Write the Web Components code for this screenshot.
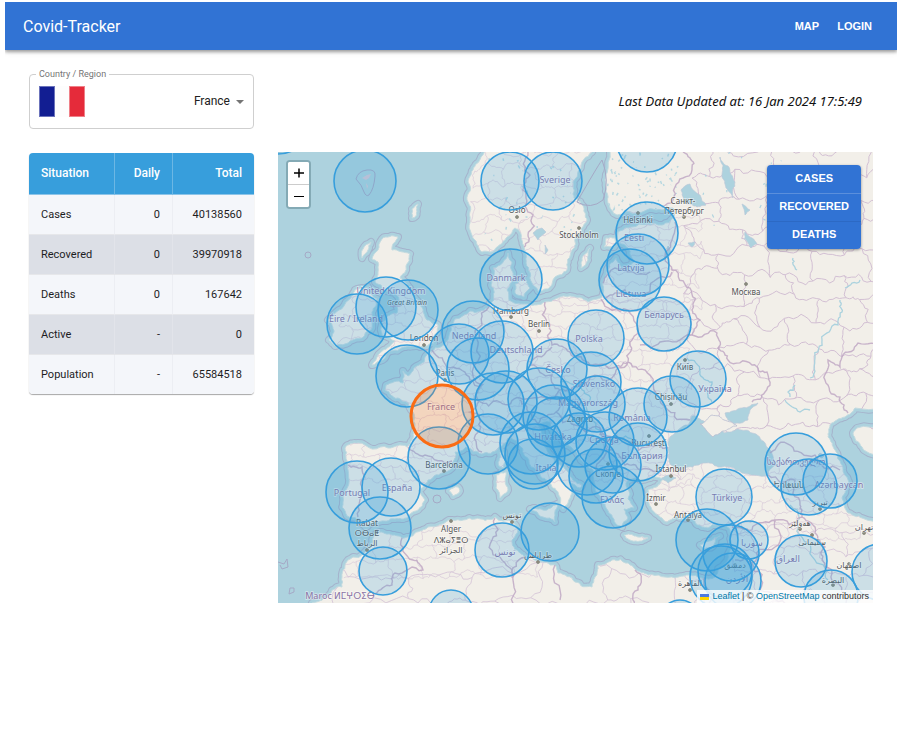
<!DOCTYPE html>
<html lang="en">
<head>
<meta charset="utf-8">
<title>Covid-Tracker</title>
<style>
  body { margin: 2px 8px 0 5px; background: #fff; color: #212121; font-family: Roboto, "Liberation Sans", sans-serif; }
</style>
</head>
<body>
<app-bar>
  Covid-Tracker
  <a slot="nav" href="#map">Map</a>
  <a slot="nav" href="#login">Login</a>
</app-bar>
<tracker-layout>
  <country-picker slot="filter"></country-picker>
  <update-stamp slot="status">Last Data Updated at: 16 Jan 2024 17:5:49</update-stamp>
  <situation-table slot="side"></situation-table>
  <case-map slot="main">
    <zoom-control slot="start"></zoom-control>
    <layer-switch slot="end"></layer-switch>
    <map-credit slot="credit"></map-credit>
  </case-map>
</tracker-layout>

<script>
const define = (name, html, setup) => {
  const template = document.createElement('template');
  template.innerHTML = html;
  customElements.define(name, class extends HTMLElement {
    constructor() {
      super();
      const root = this.attachShadow({ mode: 'open' });
      root.append(template.content.cloneNode(true));
      if (setup) setup(root);
    }
  });
};

define('app-bar', `
<style>
  :host { display: block; }
  header { display: flex; align-items: center; justify-content: space-between; min-height: 48px; padding: 0 25px 0 18px;
    background: #3173d4; color: #fff; box-shadow: 0 2px 3px rgba(0,0,0,.32), 0 1px 7px rgba(0,0,0,.14); }
  .title { font-size: 16px; line-height: 24px; padding-top: 1px; }
  nav { display: flex; gap: 18px; }
  ::slotted(a) { color: #fff; font: bold 11px/20px "Liberation Sans", sans-serif; text-transform: uppercase; text-decoration: none; }
</style>
<header><div class="title"><slot></slot></div><nav><slot name="nav"></slot></nav></header>`);

define('tracker-layout', `
<style>
  :host { display: block; padding: 18px 24px 24px; }
  .grid { display: grid; grid-template-columns: 225px minmax(0, 1fr); column-gap: 24px; row-gap: 23px; align-items: start; }
  .status { align-self: center; text-align: right; padding: 4px 11px 0 0; }
</style>
<div class="grid">
  <slot name="filter"></slot>
  <div class="status"><slot name="status"></slot></div>
  <slot name="side"></slot>
  <slot name="main"></slot>
</div>`);

define('country-picker', `
<style>
  :host { display: block; }
  fieldset { margin: 0; padding: 0 9px; border: 1px solid #cfcfcf; border-radius: 4px; min-width: 0; }
  legend { margin: 0; padding: 0 3px; font-size: 9px; line-height: 12px; color: #757575; margin-left: -3px; }
  .row { display: flex; align-items: center; height: 48px; }
  .flag { width: 46px; height: 31px; flex: none; margin-top: -5px; }
  .field { flex: 1; display: flex; align-items: center; margin-top: -6px; }
  select { flex: 1; appearance: none; border: 0; background: none; padding: 0; margin: 0 6px 0 0; font: 12px/24px Roboto, sans-serif; color: #212121;
    text-align-last: right; }
  .arrow { width: 8px; height: 4px; flex: none; margin-top: 1px; }
</style>
<fieldset>
  <legend><label for="country">Country / Region</label></legend>
  <div class="row">
    <svg class="flag" viewBox="0 0 46 31" aria-hidden="true">
      <rect width="46" height="31" fill="#fdfdfd"/>
      <rect x=".5" y=".5" width="15" height="30" fill="#121e92" stroke="#6b73bb"/>
      <rect x="30.500" y=".5" width="15" height="30" fill="#e52b3a" stroke="#ef8088"/>
    </svg>
    <div class="field">
      <select id="country"><option>France</option></select>
      <svg class="arrow" viewBox="0 0 8 4" aria-hidden="true"><path d="M0 0h8L4 4z" fill="#757575"/></svg>
    </div>
  </div>
</fieldset>`);

define('update-stamp', `
<style>
  :host { display: block; font: italic 13px/20px "Noto Sans", "Open Sans", sans-serif; color: #111; }
</style><slot></slot>`);

define('situation-table', `
<style>
  :host { display: block; margin-top: 1px; }
  .card { border-radius: 4px; overflow: hidden; box-shadow: 0 1px 1px rgba(0,0,0,.35); }
  table { width: 100%; border-collapse: separate; border-spacing: 0; table-layout: fixed; font-size: 11px; line-height: 15px; }
  col.a { width: 85px; } col.b { width: 58px; }
  th, td { padding: 12px; text-align: right; }
  th:first-child { text-align: left; }
  thead th { background: #379edc; color: #fff; font-size: 12px; line-height: 17px; font-weight: 500; border-bottom: 1px solid #8cc4e8; }
  thead th + th { border-left: 1px solid #6cb7e4; }
  tbody th { font-weight: 400; }
  tbody th, tbody td { background: #f4f6fa; border-bottom: 1px solid #e6e7ea; color: #1d1d1f; }
  tbody tr:nth-child(even) > * { background: #dcdfe6; }
  tbody tr:last-child > * { border-bottom: 0; }
  tbody td { border-left: 1px solid #eceef3; }
  tbody tr:nth-child(even) td { border-left-color: #e2e4ea; }
</style>
<div class="card"><table>
  <colgroup><col class="a"><col class="b"><col></colgroup>
  <thead><tr><th scope="col">Situation</th><th scope="col">Daily</th><th scope="col">Total</th></tr></thead>
  <tbody>
    <tr><th scope="row">Cases</th><td>0</td><td>40138560</td></tr>
    <tr><th scope="row">Recovered</th><td>0</td><td>39970918</td></tr>
    <tr><th scope="row">Deaths</th><td>0</td><td>167642</td></tr>
    <tr><th scope="row">Active</th><td>-</td><td>0</td></tr>
    <tr><th scope="row">Population</th><td>-</td><td>65584518</td></tr>
  </tbody>
</table></div>`);

define('zoom-control', `
<style>
  :host { display: block; }
  .bar { border: 2px solid rgba(70,110,120,.4); border-radius: 4px; background: #fff; background-clip: padding-box; overflow: hidden; }
  button { display: flex; align-items: center; justify-content: center; width: 21px; height: 22px; margin: 0; padding: 0; border: 0; background: #fff; }
  button + button { border-top: 1px solid #ccc; height: 23px; }
  svg { width: 10px; height: 10px; }
</style>
<div class="bar">
  <button aria-label="Zoom in"><svg viewBox="0 0 10 10"><path d="M5 .5v9M0 5h10" stroke="#000" stroke-width="1.500"/></svg></button>
  <button aria-label="Zoom out"><svg viewBox="0 0 10 10"><path d="M0 5.500h10" stroke="#000" stroke-width="1"/></svg></button>
</div>`);

define('layer-switch', `
<style>
  :host { display: block; }
  .group { display: flex; flex-direction: column; border-radius: 4px; overflow: hidden; box-shadow: 0 1px 3px rgba(0,0,0,.4); }
  button { margin: 0; padding: 0 12px 3px; height: 28px; border: 0; background: #3173d4; color: #fff; font: bold 11px/20px "Liberation Sans", sans-serif; text-transform: uppercase; }
  button + button { border-top: 1px solid #2c69c4; }
  button:nth-child(2) { border-top-color: #5b8fdc; }
</style>
<div class="group"><button>Cases</button><button>Recovered</button><button>Deaths</button></div>`);

define('map-credit', `
<style>
  :host { display: flex; align-items: center; gap: 3px; padding: 0 4px 0 3px; background: rgba(255,255,255,.8); color: #333;
    font: 9px/13px "Liberation Sans", sans-serif; white-space: nowrap; }
  a { color: #0078a8; text-decoration: none; }
  svg { width: 9px; height: 6px; }
</style>
<svg viewBox="0 0 9 6" aria-hidden="true"><path fill="#4c7be1" d="M0 0h9v3H0z"/><path fill="#ffd500" d="M0 3h9v3H0z"/></svg>
<span><a href="#leaflet">Leaflet</a> | © <a href="#osm">OpenStreetMap</a> contributors</span>`);

/* Geography, in map canvas coordinates */
const LAND = {
  mainland: '613,130 910,130 910,406 855,408 845,417 830,425 828,437 835,450 842,465 849,482 842,498 848,513 862,518 910,514 910,630 300,630 312,603 325,598 342,587 342,577 348,560 367,550 374,536 382,532 402,538 415,533 428,527 452,520 475,519 495,517 513,521 518,530 512,540 515,550 525,557 538,562 555,565 558,573 575,582 592,587 595,577 598,565 612,560 628,563 636,570 648,575 675,578 688,575 702,578 715,577 725,563 732,547 730,530 718,524 708,528 702,527 692,519 675,516 667,522 660,517 652,510 648,500 648,490 660,484 664,478 642,480 635,478 626,483 630,494 628,499 634,508 624,509 628,518 622,527 616,524 609,513 605,503 597,493 594,482 593,470 580,458 565,445 553,432 550,422 538,425 541,442 548,452 555,463 568,472 582,485 580,488 570,483 572,493 568,503 563,509 560,497 552,487 541,477 531,467 524,455 518,443 508,438 498,448 482,454 466,447 455,452 453,462 452,468 442,473 428,480 419,490 425,500 418,510 408,517 395,519 378,522 366,527 360,519 347,516 343,497 348,470 346,457 345,448 358,443 388,448 407,447 412,440 415,425 413,412 408,403 398,398 385,390 386,385 403,383 403,371 408,376 414,368 424,362 430,352 442,346 450,332 455,319 470,311 488,308 494,300 491,285 493,268 508,253 512,262 513,277 507,290 509,300 528,304 545,302 570,296 588,302 601,298 603,283 608,268 616,258 622,268 634,262 628,248 617,242 618,232 632,227 662,225 674,217 673,208 662,210 638,213 617,215 608,203 606,187 607,173',
  scandinavia: '488,130 481,157 473,170 468,182 467,200 470,220 475,240 482,252 490,252 505,240 515,228 520,232 524,247 526,263 532,283 538,291 550,287 555,277 567,270 572,250 576,237 587,220 584,208 574,198 573,182 579,170 592,152 600,130',
  britain: '382,239 398,237 392,250 410,254 406,266 400,278 408,286 413,296 423,309 427,320 438,325 437,333 430,338 434,343 420,347 404,347 390,351 376,363 372,365 380,353 395,341 390,338 382,335 381,328 386,318 397,313 399,300 394,292 385,291 375,282 378,262 372,259 378,250',
  ireland: '355,290 368,287 377,299 372,312 371,330 350,341 335,346 329,340 334,332 328,320 339,310 346,302',
  zealand: '515,284 526,280 530,288 524,297 515,293',
  gotland: '582,258 590,248 588,260 581,268',
  saaremaa: '606,238 615,238 614,247 604,247',
  corsica: '500,452 504,452 504,468 499,466',
  sardinia: '496,475 506,472 508,490 500,498 496,488',
  sicily: '530,509 543,510 557,504 555,522 543,517',
  crete: '624,535 636,536 648,538 642,541 626,538',
  cyprus: '700,545 709,541 720,536 713,546 704,549',
  balearic: '449,491 458,487 460,491 453,496',
  shetland: '412,209 418,204 416,216 412,218',
  hebrides: '363,249 371,242 368,250 362,258',
  caspianEast: '910,425 857,428 853,433 862,447 885,455 910,455'
};
const WATER = [
  '671,465 668,450 671,436 678,430 688,425 692,416 700,419 712,428 724,433 738,429 752,433 765,443 772,454 776,465 768,475 742,473 718,467 705,463 688,467 680,472',
  '725,413 742,408 758,403 750,410 748,420 737,423 728,420',
  '681,190 690,184 700,195 706,205 694,206 683,203',
  '720,157 728,166 735,182 733,198 726,188 722,175',
  '662,478 669,475 676,478 668,483',
  '742,204 750,210 745,215', '745,232 752,238 757,244 751,248', '688,243 695,242 692,247',
  '533,233 542,228 546,232 538,240', '545,245 548,250 545,254',
  '668,246 671,252 667,256', '818,455 820,453 824,456 821,458'
];
const CRIMEA = '700,424 712,415 724,420 737,426 725,431 713,437 706,430';
const BORDERS = [
  '528,152 530,175 526,195 533,215 528,235 524,247', '683,152 690,158 692,170 675,187 662,207',
  '675,222 668,250 672,270 690,288 692,310 700,320 692,335 660,342 640,345',
  '545,302 550,325 552,345 570,352 590,365 612,368 628,362 632,340 628,310 601,299',
  '692,335 717,333 718,348 728,360 752,365 767,372 765,392 752,402',
  '885,346 858,343 842,357 840,367 828,360 825,380 840,397 848,413',
  '408,447 425,455 452,461', '348,465 362,467 362,490 358,517',
  '432,350 450,368 470,380 482,385 478,400 470,412 480,430 482,452',
  '478,400 500,402 520,398 548,400 560,390 552,375 530,365 552,347',
  '490,305 482,325 478,345 482,385', '560,390 580,385 612,378 628,362 650,375 668,410 690,420',
  '560,392 556,412 575,425 600,428 625,440 655,446 668,448', '600,428 606,450 596,470', '606,450 625,465 640,470 662,470',
  '538,425 530,412 520,400', '538,424 556,412', '606,298 625,290 650,292 672,272', '603,283 615,268 650,272',
  '402,538 413,560 423,570 395,573 392,585 375,594', '495,518 492,540 505,563 513,580 508,610', '525,557 512,578',
  '635,570 638,590 636,610', '732,527 752,530 775,520 802,517', '775,520 775,547 752,563 735,560',
  '802,517 815,533 825,547 822,560 835,583 845,610', '770,453 790,445 815,455 840,470',
  '768,475 795,480 800,505 802,517', '752,563 760,590 790,605', '705,577 712,595 708,610', '555,565 560,600', '390,306 402,305'
];
const RIVERS = ['840,300 842,312 838,325 822,340 815,358 810,378', '687,358 700,372 712,382 708,395 712,402', '795,385 788,392 790,397', '793,258 797,270', '560,382 580,386 590,400 592,420 620,438 640,445', '785,400 800,412 810,410', '845,288 860,280', '790,505 800,535 815,560 828,580'];
/* x, y, radius */
const MARKERS = [[278,121,33],[365,181,31],[510,181,29],[553,181,29],[647,142,30],[647,233,31],[638,265,31],[630,280,31],[511,280,31],[664,324,27],[386,307,30],[408,310,30],[357,324,30],[407,376,31],[459,354,30],[473,332,31],[478,369,31],[502,352,31],[596,338,28],[557,369,30],[591,382,30],[597,404,28],[638,417,29],[672,404,28],[698,379,28],[539,399,31],[506,402,31],[493,404,31],[488,444,30],[439,458,31],[391,487,29],[357,492,31],[380,528,31],[383,571,24],[451,612,22],[502,550,27],[550,532,29],[613,497,31],[638,452,29],[613,465,28],[605,441,29],[596,476,27],[587,465,30],[579,440,27],[557,427,30],[554,416,31],[533,464,25],[531,443,31],[535,454,30],[724,497,28],[707,540,31],[731,553,28],[749,540,19],[721,577,31],[725,571,27],[733,581,28],[801,561,26],[880,572,28],[831,597,27],[680,620,20],[796,464,31],[809,487,28],[830,481,27]];
const COUNTRIES = [['United Kingdom',391,294],['Éire / Ireland',356,322],['Sverige',555,183],['Danmark',506,281],['Eesti',634,241],['Latvija',631,271],['Lietuva',631,297],['Беларусь',664,318],['Polska',589,342],['Nederland',474,339],['Deutschland',516,353],['Česko',558,373],['Slovensko',594,387],['Magyarország',588,406],['România',632,421],['Україна',715,392],['France',441,410],['Hrvatska',553,440],['Србија',604,443],['Italia',546,471],['България',642,459],['Ελλάς',612,503],['España',397,491],['Portugal',352,496],['Türkiye',727,501],['საქართველო',796,465],['Azərbaycan',839,488],['سوريا',752,546],['العراق',788,562],['الأردن',737,582],['تونس',505,555],['Maroc ⵍⵎⵖⵔⵉⴱ',340,599]];
const CITIES = [['Oslo',517,213,217],['Stockholm',579,238,228],['Helsinki',638,223,213],['Санкт-',683,204],['Петербург',684,214,217],['Москва',746,295,284],['Hamburg',511,314,317],['Berlin',539,327,331],['London',424,341,345],['Paris',445,376,380],['Київ',685,370,360],['Chișinău',671,400,404],['București',649,446,436],['Zagreb',580,422,419],['Скопје',608,477,464],['Barcelona',444,468,471],['İstanbul',671,472,476],['İzmir',656,501,504],['Antalya',688,518,520],['Alger',451,532,521],['ⴷⵣⴰⵢⴻⵔ',451,543],['الجزائر',451,553],['Rabat',367,526],['ⵔⴱⴰⵟ',367,536],['الرباط',367,546,550],['تونس',512,518,522],['طرابلس',538,558,562],['Երևան',789,488,485],['تبريز',820,505,509],['هەولێر',800,526,529],['سليمانى',812,545,535],['تهران',864,530,533],['اصفهان',849,568,564],['البصرة',833,583,585],['دمشق',735,568,565],['القاهرة',690,586,590]];

/* Splits every segment at displaced midpoints, so that a coarse outline reads as a coast */
let seed = 7;
const rnd = () => (seed = (seed * 16807) % 2147483647) / 2147483647;
const rough = (text, closed, amount = .3) => {
  let p = text.split(' ').map(s => s.split(',').map(Number));
  if (closed) p.push(p[0]);
  for (let pass = 0; pass < 3; pass++) {
    const q = [p[0]];
    for (let i = 1; i < p.length; i++) {
      const [a, b] = p[i - 1], [c, d] = p[i], length = Math.hypot(c - a, d - b);
      const k = (rnd() - .5) * (length > 60 ? 0 : amount);
      if (length > 3) q.push([(a + c) / 2 + (b - d) * k, (b + d) / 2 + (c - a) * k]);
      q.push(p[i]);
    }
    p = q;
  }
  return 'M' + p.map(v => v.map(n => Math.round(n * 10) / 10).join(' ')).join('L') + (closed ? 'Z' : '');
};
/* Jittered honeycomb of provinces */
const mesh = (x0, y0, x1, y1, s) => {
  const cols = Math.ceil((x1 - x0) / s), rows = Math.ceil((y1 - y0) / s), node = [];
  for (let r = 0; r <= rows; r++) for (let c = 0; c <= cols; c++)
    node.push([x0 + (c + (rnd() - .5) * .55) * s, y0 + (r + (rnd() - .5) * .55) * s]);
  let d = '';
  for (let r = 0; r <= rows; r++) for (let c = 0; c <= cols; c++) {
    const n = node[r * (cols + 1) + c], right = c < cols && node[r * (cols + 1) + c + 1], down = r < rows && node[(r + 1) * (cols + 1) + c];
    if (right) d += rough(n + ' ' + right, false, .5);
    if (down && (r + c) % 2) d += rough(n + ' ' + down, false, .5);
  }
  return d;
};
const specks = (x0, y0, x1, y1, count) => {
  let d = '';
  for (let i = 0; i < count; i++) { const x = x0 + rnd() * (x1 - x0), y = y0 + rnd() * (y1 - y0); d += `M${x.toFixed(1)} ${y.toFixed(1)}l${(rnd() * 4 - 2).toFixed(1)} ${(rnd() * 5 - 2).toFixed(1)}`; }
  return d;
};

define('case-map', `
<style>
  :host { display: block; position: relative; aspect-ratio: 595 / 451; overflow: hidden; background: #add2de; }
  svg { display: block; width: 100%; height: 100%; }
  text { text-anchor: middle; font: 8px "Noto Sans", "DejaVu Sans", sans-serif; paint-order: stroke; stroke: rgba(255,255,255,.5); stroke-width: 1.500px; }
  .country { font-size: 9px; fill: #8a74a5; }
  .city { fill: #555; }
  .region { font-size: 7px; font-style: italic; fill: #555; }
  .start { position: absolute; left: 8px; top: 8px; }
  .end { position: absolute; right: 12px; top: 13px; }
  .credit { position: absolute; right: 0; bottom: 0; }
</style>
<svg viewBox="278 152 595 451" preserveAspectRatio="xMidYMid slice" role="img" aria-label="Map of Europe with case markers"></svg>
<div class="start"><slot name="start"></slot></div>
<div class="end"><slot name="end"></slot></div>
<div class="credit"><slot name="credit"></slot></div>`, root => {
  const land = Object.values(LAND).map(t => rough(t, true)).join('');
  const water = WATER.map(t => rough(t, true)).join('');
  const labels = (list, kind) => list.map(([t, x, y]) => `<text class="${kind}" x="${x}" y="${y}">${t}</text>`).join('');
  root.querySelector('svg').innerHTML = `
    <defs><clipPath id="land"><path d="${land}"/></clipPath></defs>
    <g stroke-linejoin="round">
      <path d="${land}" fill="none" stroke="#a5b3cc" stroke-width="8"/>
      <path d="${land}" fill="#add2de" stroke="#add2de" stroke-width="6"/>
      <path d="${land}" fill="#f2efe9" stroke="#c3dbe0" stroke-width="1"/>
    </g>
    <g clip-path="url(#land)" fill="none">
      <path d="${mesh(690, 150, 880, 420, 25)}" stroke="#d2bfd3" stroke-width="1"/>
      <path d="${mesh(340, 300, 690, 480, 13)}${mesh(470, 150, 590, 290, 17)}${mesh(600, 215, 690, 300, 14)}${mesh(645, 465, 860, 530, 12)}${mesh(345, 530, 540, 570, 15)}" stroke="#d6c6d8" stroke-width=".8" opacity=".8"/>
      <path d="${mesh(300, 570, 690, 620, 34)}${mesh(735, 530, 880, 610, 22)}" stroke="#d6c6d8" stroke-width=".9"/>
      <path d="${specks(608, 152, 680, 212, 80)}${specks(480, 152, 580, 240, 40)}" stroke="#b8d8e0" stroke-width="1.500"/>
      <path d="${specks(700, 152, 800, 260, 22)}" stroke="#b0d4df" stroke-width="1.200"/>
    </g>
    <path d="${water}" fill="#add2de" stroke="#bcc8d8" stroke-width=".7"/>
    <path d="${rough(CRIMEA, true)}" fill="#f2efe9" stroke="#b9bcd1" stroke-width=".8"/>
    <path d="${RIVERS.map(t => rough(t, false, .6)).join('')}" fill="none" stroke="#abd2de" stroke-width="1.300"/>
    <path d="${BORDERS.map(t => rough(t, false, .5)).join('')}" fill="none" stroke="#bda4c2" stroke-width="1.400" opacity=".8"/>
    <g fill="none" stroke="#a5a9c6">
      <path d="M356 179q2-8 11-9q9-1 8 6q-1 13-6 19q-3 2-5-3q-2-7-8-13z"/>
      <path fill="#d9c9d6" stroke="none" d="M362 178l5-3 4-1-2 4-3 2z M366 183l2 3-1 3z"/>
      <circle cx="308" cy="255" r="3"/><circle cx="437" cy="499" r="4"/>
      <path d="M577 202q20-35 25-42q8 20 1 40q-12 10-26 2M278 562l6 2 3-5 1 8-6 2-2-4M290 588l4 0 0 4-5 2z"/>
    </g>
    <g fill="#8b8b7c" stroke="#85877c" stroke-width=".8">${CITIES.filter(c => c[3]).map(c => `<circle cx="${c[1]}" cy="${c[3]}" r="1.500"/>`).join('')}</g>
    ${labels(COUNTRIES, 'country')}${labels(CITIES, 'city')}
    <text class="region" x="407" y="305">Great Britain</text>
    <g fill="#379edc" fill-opacity=".2" stroke="#379edc" stroke-width="1.600">${MARKERS.map(([x, y, r]) => `<circle cx="${x}" cy="${y}" r="${r}"/>`).join('')}</g>
    <circle cx="442" cy="416" r="31" fill="#fa6c14" fill-opacity=".2" stroke="#fa6c14" stroke-width="3"/>`;
});
</script>
</body>
</html>
